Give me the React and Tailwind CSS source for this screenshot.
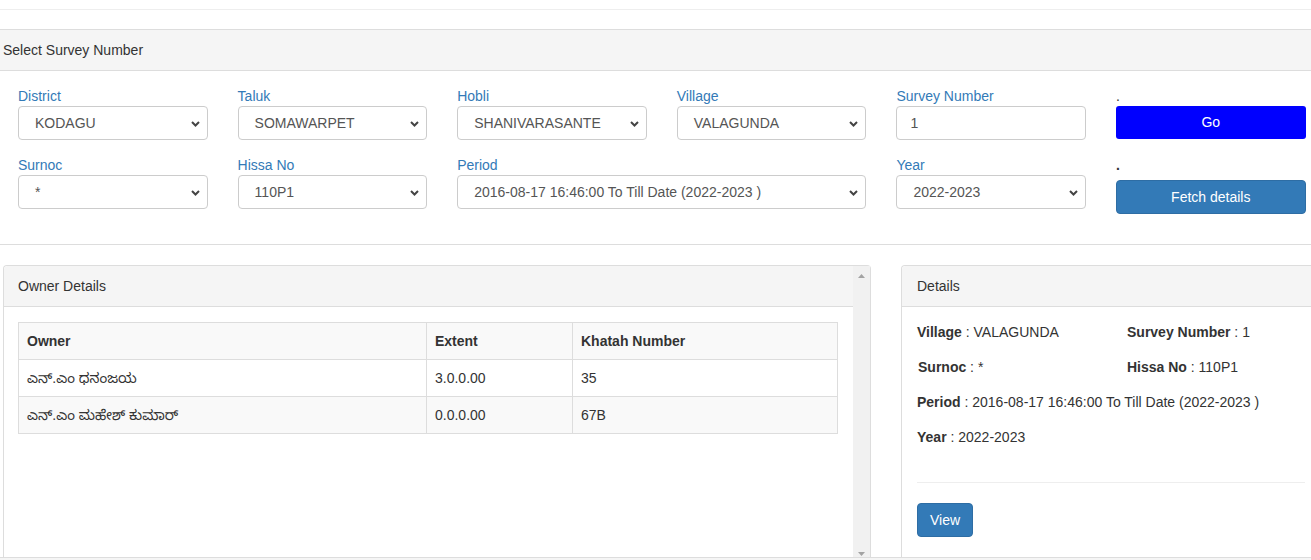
import React from "react";

const font = "font-['Liberation_Sans',Arial,'Noto_Sans','Noto_Sans_Kannada',sans-serif]";

function Chevron() {
  return (
    <svg
      className="pointer-events-none absolute right-[7px] top-[14px]"
      width="9"
      height="6"
      viewBox="0 0 9 6"
    >
      <path d="M1 1l3.5 3.5L8 1" fill="none" stroke="#444" strokeWidth="2" />
    </svg>
  );
}

function SelectBox({ value }) {
  return (
    <div className="relative h-[34px] w-full rounded-[4px] border border-[#ccc] bg-white">
      <div className="flex h-full items-center pl-[16px] pr-[24px] text-[14px] text-[#555] whitespace-nowrap overflow-hidden">
        {value}
      </div>
      <Chevron />
    </div>
  );
}

function Field({ label, children, span, dark }) {
  return (
    <div className={`px-[15px] ${span ? "col-span-2" : ""}`}>
      <div className={`h-[20px] leading-[20px] text-[14px] ${dark ? "text-[#333]" : "text-[#337ab7]"}`}>
        {label}
      </div>
      {children}
    </div>
  );
}

function Arrow({ up }) {
  return (
    <svg width="7" height="4" viewBox="0 0 7 4">
      <path d={up ? "M0 4L3.5 0L7 4Z" : "M0 0L3.5 4L7 0Z"} fill="#a3a3a3" />
    </svg>
  );
}

const owners = [
  { name: "ಎನ್.ಎಂ ಧನಂಜಯ", extent: "3.0.0.00", khatah: "35" },
  { name: "ಎನ್.ಎಂ ಮಹೇಶ್ ಕುಮಾರ್", extent: "0.0.0.00", khatah: "67B" },
];

export default function App() {
  return (
    <div className={`${font} h-[560px] w-[1311px] overflow-hidden bg-white text-[14px] text-[#333]`}>
      <div className="h-[10px] border-b border-[#eee]" />

      {/* survey selection panel */}
      <div className="mt-[19px] border-y border-[#ddd]">
        <div className="flex h-[41px] items-center border-b border-[#ddd] bg-[#f5f5f5] pl-[3px]">
          Select Survey Number
        </div>
        <div className="grid grid-cols-[repeat(6,219.6px)] items-start gap-y-[15px] pb-[30px] pl-[3px] pt-[15px]">
          <Field label="District">
            <SelectBox value="KODAGU" />
          </Field>
          <Field label="Taluk">
            <SelectBox value="SOMAWARPET" />
          </Field>
          <Field label="Hobli">
            <SelectBox value="SHANIVARASANTE" />
          </Field>
          <Field label="Village">
            <SelectBox value="VALAGUNDA" />
          </Field>
          <Field label="Survey Number">
            <div className="flex h-[34px] items-center rounded-[4px] border border-[#ccc] bg-white px-[13px] text-[#555]">
              1
            </div>
          </Field>
          <Field label="." dark>
            <button className="h-[33px] w-full rounded-[3px] bg-[#0000ff] text-[14px] text-white">
              Go
            </button>
          </Field>

          <Field label="Surnoc">
            <SelectBox value="*" />
          </Field>
          <Field label="Hissa No">
            <SelectBox value="110P1" />
          </Field>
          <Field label="Period" span>
            <SelectBox value="2016-08-17 16:46:00 To Till Date (2022-2023 )" />
          </Field>
          <Field label="Year">
            <SelectBox value="2022-2023" />
          </Field>
          <div className="px-[15px]">
            <div className="h-[20px] font-bold leading-[20px] text-[#333]">.</div>
            <button className="mt-[5px] h-[34px] w-full rounded-[4px] border border-[#2e6da4] bg-[#337ab7] text-[14px] text-white">
              Fetch details
            </button>
          </div>
        </div>
      </div>

      {/* lower panels */}
      <div className="mt-[20px] flex h-[292px]">
        <div className="ml-[3px] flex w-[868px] rounded-t-[4px] border border-b-0 border-[#ddd]">
          <div className="flex-1">
            <div className="flex h-[41px] items-center rounded-tl-[4px] border-b border-[#ddd] bg-[#f5f5f5] pl-[14px]">
              Owner Details
            </div>
            <div className="pl-[14px] pr-[15px] pt-[15px]">
              <table className="w-[820px] border-collapse border border-[#ddd] text-left">
                <thead>
                  <tr className="h-[37px] bg-[#f9f9f9]">
                    <th className="w-[408px] border border-[#ddd] px-[8px] font-bold">Owner</th>
                    <th className="w-[146px] border border-[#ddd] px-[8px] font-bold">Extent</th>
                    <th className="border border-[#ddd] px-[8px] font-bold">Khatah Number</th>
                  </tr>
                </thead>
                <tbody>
                  {owners.map((o, i) => (
                    <tr key={i} className={`h-[37px] ${i % 2 ? "bg-[#f9f9f9]" : "bg-white"}`}>
                      <td className="border border-[#ddd] px-[8px]">{o.name}</td>
                      <td className="border border-[#ddd] px-[8px]">{o.extent}</td>
                      <td className="border border-[#ddd] px-[8px]">{o.khatah}</td>
                    </tr>
                  ))}
                </tbody>
              </table>
            </div>
          </div>
          <div className="flex w-[17px] flex-col items-center justify-between bg-[#f1f1f1] pb-[1px] pt-[8px]">
            <Arrow up />
            <Arrow />
          </div>
        </div>

        <div className="ml-[30px] w-[420px] rounded-t-[4px] border border-b-0 border-[#ddd]">
          <div className="flex h-[41px] items-center rounded-tl-[4px] border-b border-[#ddd] bg-[#f5f5f5] pl-[15px]">
            Details
          </div>
          <div className="pl-[15px] pr-[14px] pt-[15px]">
            <div className="grid grid-cols-[210px_1fr] leading-[20px]">
              <div className="mb-[15px]">
                <b>Village</b> : VALAGUNDA
              </div>
              <div className="mb-[15px]">
                <b>Survey Number</b> : 1
              </div>
              <div className="mb-[15px] pl-[1px]">
                <b>Surnoc</b> : *
              </div>
              <div className="mb-[15px]">
                <b>Hissa No</b> : 110P1
              </div>
              <div className="col-span-2 mb-[15px]">
                <b>Period</b> : 2016-08-17 16:46:00 To Till Date (2022-2023 )
              </div>
              <div className="col-span-2 mb-[15px]">
                <b>Year</b> : 2022-2023
              </div>
            </div>
            <hr className="mt-[20px] w-[388px] border-t border-[#eee]" />
            <button className="mt-[20px] h-[34px] rounded-[4px] border border-[#2e6da4] bg-[#337ab7] px-[12px] text-white">
              View
            </button>
          </div>
        </div>
      </div>

      <div className="h-[10px] border-t border-[#ddd] bg-[#f5f5f5]" />
    </div>
  );
}
